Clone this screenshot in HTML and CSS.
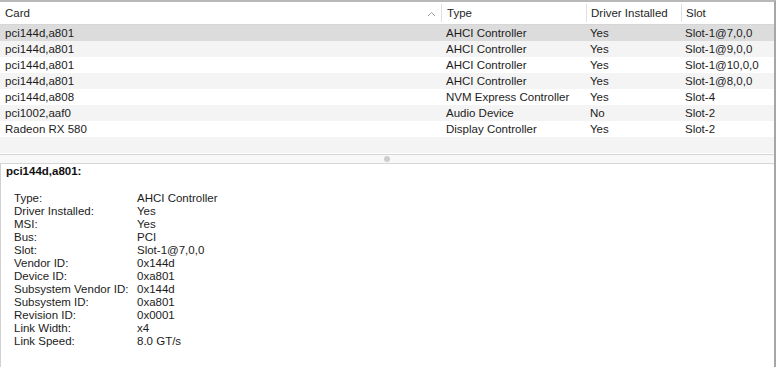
FILE: index.html
```html
<!DOCTYPE html>
<html lang="en">
<head>
    <meta charset="UTF-8">
    <title>PCI Cards</title>
    <link rel="stylesheet" href="styles.css">
</head>
<body>
    <div class="window">
        <div class="table">
            <div class="row header">
                <div class="cell card">Card
                    <svg class="sort" width="9" height="6" viewBox="0 0 9 6"><path d="M1 5 L4.5 1.5 L8 5" fill="none" stroke="#9c9c9c" stroke-width="1"/></svg>
                </div>
                <div class="cell type">Type</div>
                <div class="cell driver">Driver Installed</div>
                <div class="cell slot">Slot</div>
            </div>
            <div class="row selected">
                <div class="cell card">pci144d,a801</div>
                <div class="cell type">AHCI Controller</div>
                <div class="cell driver">Yes</div>
                <div class="cell slot">Slot-1@7,0,0</div>
            </div>
            <div class="row">
                <div class="cell card">pci144d,a801</div>
                <div class="cell type">AHCI Controller</div>
                <div class="cell driver">Yes</div>
                <div class="cell slot">Slot-1@9,0,0</div>
            </div>
            <div class="row">
                <div class="cell card">pci144d,a801</div>
                <div class="cell type">AHCI Controller</div>
                <div class="cell driver">Yes</div>
                <div class="cell slot">Slot-1@10,0,0</div>
            </div>
            <div class="row">
                <div class="cell card">pci144d,a801</div>
                <div class="cell type">AHCI Controller</div>
                <div class="cell driver">Yes</div>
                <div class="cell slot">Slot-1@8,0,0</div>
            </div>
            <div class="row">
                <div class="cell card">pci144d,a808</div>
                <div class="cell type">NVM Express Controller</div>
                <div class="cell driver">Yes</div>
                <div class="cell slot">Slot-4</div>
            </div>
            <div class="row">
                <div class="cell card">pci1002,aaf0</div>
                <div class="cell type">Audio Device</div>
                <div class="cell driver">No</div>
                <div class="cell slot">Slot-2</div>
            </div>
            <div class="row">
                <div class="cell card">Radeon RX 580</div>
                <div class="cell type">Display Controller</div>
                <div class="cell driver">Yes</div>
                <div class="cell slot">Slot-2</div>
            </div>
            <div class="row"></div>
        </div>

        <div class="splitter"><span class="grip"></span></div>

        <div class="details">
            <h3>pci144d,a801:</h3>
            <dl class="props">
                <dt>Type:</dt><dd>AHCI Controller</dd>
                <dt>Driver Installed:</dt><dd>Yes</dd>
                <dt>MSI:</dt><dd>Yes</dd>
                <dt>Bus:</dt><dd>PCI</dd>
                <dt>Slot:</dt><dd>Slot-1@7,0,0</dd>
                <dt>Vendor ID:</dt><dd>0x144d</dd>
                <dt>Device ID:</dt><dd>0xa801</dd>
                <dt>Subsystem Vendor ID:</dt><dd>0x144d</dd>
                <dt>Subsystem ID:</dt><dd>0xa801</dd>
                <dt>Revision ID:</dt><dd>0x0001</dd>
                <dt>Link Width:</dt><dd>x4</dd>
                <dt>Link Speed:</dt><dd>8.0 GT/s</dd>
            </dl>
        </div>
    </div>
</body>
</html>
```

FILE: styles.css
```css
:root {
    --row-alt: #f4f4f4;
    --selected: #dcdcdc;
    --line: #d6d6d6;
    --text: #1c1c1c;
}

body {
    margin: 0;
    font-family: 'Liberation Sans', Arial, sans-serif;
    font-size: 11.5px;
    color: var(--text);
    background: #ffffff;
}

.window {
    width: 774px;
    height: 365px;
    border-top: 2px solid #b9b9b9;
    border-right: 2px solid #a6a6a6;
    display: flex;
    flex-direction: column;
    overflow: hidden;
}

.row {
    display: flex;
    height: 16px;
    line-height: 17px;
}

.row:nth-child(odd) {
    background-color: var(--row-alt);
}

.row.selected {
    background-color: var(--selected);
}

.row.header {
    height: 22px;
    line-height: 22px;
    background-color: #ffffff;
    border-bottom: 1px solid var(--line);
}

.cell {
    padding-left: 5px;
    white-space: nowrap;
    overflow: hidden;
    box-sizing: border-box;
}

.card { width: 441px; position: relative; }
.type { width: 145px; }
.driver { width: 95px; padding-left: 4px; }
.slot { flex: 1; padding-left: 4px; }

.header .cell + .cell {
    border-left: 1px solid #e0e0e0;
}

.header .cell {
    color: #262626;
    margin: 2px 0;
    line-height: 19px;
}

.sort {
    position: absolute;
    right: 5px;
    top: 7px;
}

.splitter {
    height: 8px;
    margin-top: 1px;
    border-top: 1px solid var(--line);
    border-bottom: 1px solid var(--line);
    background-color: #f8f8f8;
    display: flex;
    justify-content: center;
    align-items: center;
}

.grip {
    width: 6px;
    height: 6px;
    border-radius: 50%;
    background-color: #cdcdcd;
}

.details {
    flex: 1;
    border-left: 1px solid #d0d0d0;
    padding: 1px 0 0 5px;
}

.details h3 {
    margin: 0;
    font-size: 11.5px;
    font-weight: bold;
    line-height: 13px;
    color: #111;
}

.props {
    display: grid;
    grid-template-columns: 123px auto;
    grid-auto-rows: 13px;
    line-height: 13px;
    margin: 14px 0 0 8px;
}

.props dt,
.props dd {
    margin: 0;
    white-space: nowrap;
}
```
